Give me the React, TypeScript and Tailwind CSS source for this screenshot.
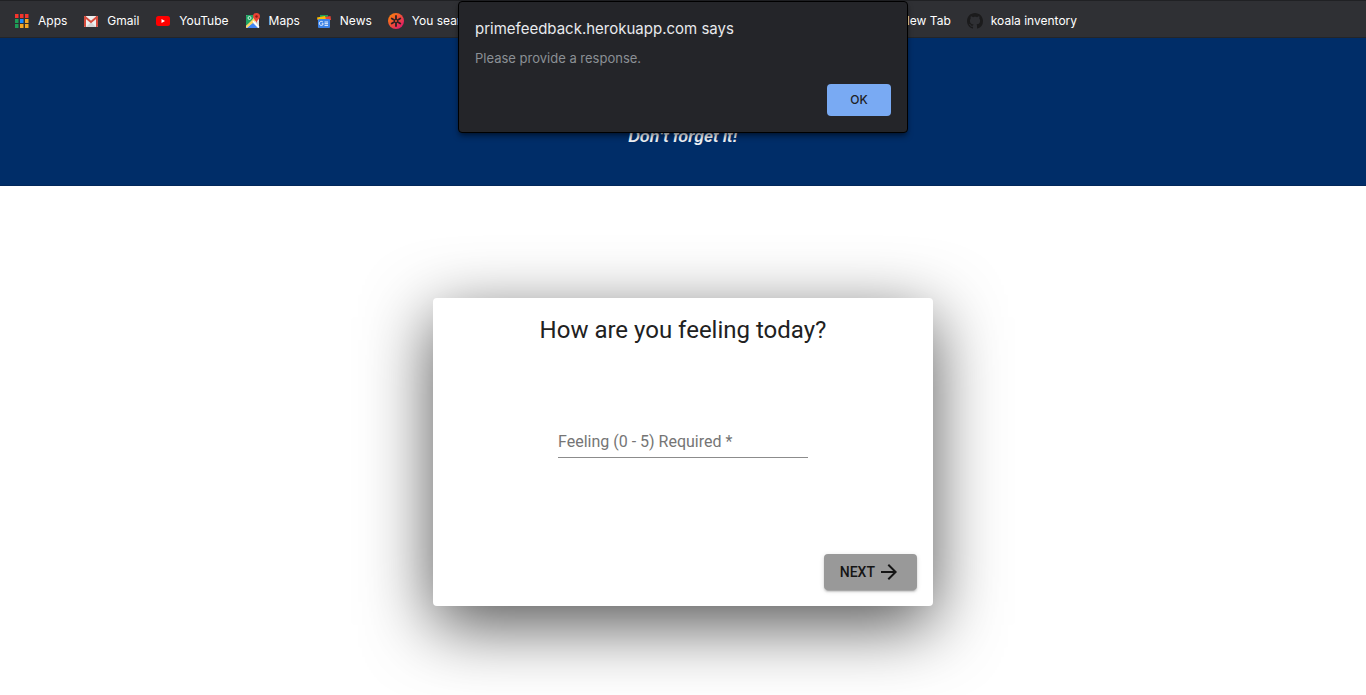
import { useId } from "react";
import type { ReactNode } from "react";

function AppsIcon() {
  const rows = [
    ["#f4352c", "#f4352c", "#f4352c"],
    ["#1e9e57", "#1a8cff", "#f5a623"],
    ["#1e9e57", "#f5a623", "#f5a623"],
  ];
  return (
    <svg viewBox="0 0 16 16" className="size-4" aria-hidden="true">
      {rows.map((row, y) =>
        row.map((c, x) => (
          <rect key={`${x}-${y}`} x={1 + x * 5} y={1 + y * 5} width="3.500" height="4" fill={c} />
        ))
      )}
    </svg>
  );
}

function GmailIcon() {
  return (
    <svg viewBox="0 0 16 16" className="size-4" aria-hidden="true">
      <rect x="1" y="3" width="14" height="11" rx="1" fill="#eeeeee" />
      <path d="M3 14 8 9l5 5z" fill="#d5d5d5" />
      <path d="M1 4a1 1 0 0 1 1-1h1v11H2a1 1 0 0 1-1-1zM13 3h1a1 1 0 0 1 1 1v9a1 1 0 0 1-1 1h-1z" fill="#d54b3d" />
      <path d="M1.500 3.500 8 9l6.500-5.500" fill="none" stroke="#d54b3d" strokeWidth="2" />
    </svg>
  );
}

function YouTubeIcon() {
  return (
    <svg viewBox="0 0 16 16" className="size-4" aria-hidden="true">
      <rect x="1" y="3" width="14" height="10" rx="2.500" fill="#ff0000" />
      <path d="M6.500 6v4L10 8z" fill="#fff" />
    </svg>
  );
}

function MapsIcon() {
  return (
    <svg viewBox="0 0 16 16" className="size-4" aria-hidden="true">
      <rect x="1" y="2" width="13" height="13" rx="1" fill="#e8eaed" />
      <path d="M2 2h8L7 8 1 13V3a1 1 0 0 1 1-1z" fill="#1fa463" />
      <path d="M2 15 7.500 9.500 13 15z" fill="#4285f4" />
      <path d="M1 13 10 4l2 3-10.500 8z" fill="#fdd663" />
      <path d="M9 9.500 14 14V8z" fill="#dadce0" />
      <path d="m8 8 6 6.500" stroke="#fff" strokeWidth="1.500" />
      <circle cx="4.500" cy="5" r="1.500" fill="none" stroke="#fff" strokeWidth=".8" />
      <path d="M11.500 0a3.500 3.500 0 0 1 3.500 3.500c0 2.500-3 3.500-3.500 6.500-.5-3-3.500-4-3.500-6.500A3.500 3.500 0 0 1 11.500 0z" fill="#ea4335" />
      <circle cx="11.500" cy="3.500" r="1.200" fill="#8c1d14" />
    </svg>
  );
}

function NewsIcon() {
  return (
    <svg viewBox="0 0 16 16" className="size-4" aria-hidden="true">
      <path d="M4 2h8v5H4z" fill="#1e9e57" />
      <path d="m9 4 5.500-1 .5 4H9z" fill="#ea4335" />
      <path d="m1 4.500 8-1.500 1 4H1.500z" fill="#fbbc04" />
      <rect x="2" y="6" width="12" height="9" rx="1" fill="#3b82e8" />
      <path d="M7 9.300a2 2 0 1 0 .3 1.500H5.700M8.500 9H12M8.500 10.700H12M8.500 12.400H12" fill="none" stroke="#fff" strokeWidth=".9" />
    </svg>
  );
}

function AsteriskIcon() {
  const gradient = useId();
  return (
    <svg viewBox="0 0 16 16" className="size-4" aria-hidden="true">
      <defs>
        <linearGradient id={gradient} x1="0" y1="0" x2="1" y2="1">
          <stop offset="0.100" stopColor="#fd7f0c" />
          <stop offset="0.900" stopColor="#e0186c" />
        </linearGradient>
      </defs>
      <circle cx="8" cy="8" r="8" fill={`url(#${gradient})`} />
      <path d="M8 3v10M3.700 5.500l8.600 5M12.300 5.500l-8.600 5" stroke="#2b2023" strokeWidth="1.800" strokeLinecap="round" />
      <circle cx="8" cy="8" r="1" fill="#f0552e" />
    </svg>
  );
}

function GithubIcon() {
  return (
    <svg viewBox="0 0 16 16" className="size-4" aria-hidden="true">
      <path
        fill="#1b1b1c"
        d="M8 0C3.580 0 0 3.580 0 8c0 3.540 2.290 6.530 5.470 7.590.4.070.55-.17.55-.38 0-.19-.01-.82-.01-1.490-2.010.37-2.530-.49-2.690-.94-.09-.23-.48-.94-.82-1.130-.28-.15-.68-.52-.01-.53.63-.01 1.080.58 1.230.82.72 1.210 1.870.87 2.330.66.07-.52.28-.87.51-1.070-1.780-.2-3.640-.89-3.640-3.950 0-.87.31-1.590.82-2.150-.08-.2-.36-1.020.08-2.120 0 0 .67-.21 2.200.82.64-.18 1.320-.27 2-.27s1.360.09 2 .27c1.530-1.040 2.200-.82 2.200-.82.44 1.100.16 1.920.08 2.120.51.56.82 1.270.82 2.150 0 3.070-1.870 3.750-3.650 3.950.29.25.54.73.54 1.480 0 1.070-.01 1.930-.01 2.200 0 .21.15.46.55.38A8.010 8.010 0 0 0 16 8c0-4.420-3.580-8-8-8z"
      />
    </svg>
  );
}

function Bookmark({ icon, label, className = "" }: { icon?: ReactNode; label: string; className?: string }) {
  return (
    <a href="#" className={`flex shrink-0 items-center gap-2 whitespace-nowrap ${className}`}>
      {icon}
      <span>{label}</span>
    </a>
  );
}

function BookmarksBar() {
  return (
    <nav
      aria-label="Bookmarks"
      className="flex h-[38px] items-center gap-4 overflow-hidden border-y border-t-[#202124] border-b-[#232529] bg-[#2f3034] px-3.5 pt-1 font-['Inter','Liberation_Sans',sans-serif] text-xs text-white"
    >
      <Bookmark icon={<AppsIcon />} label="Apps" />
      <Bookmark icon={<GmailIcon />} label="Gmail" />
      <Bookmark icon={<YouTubeIcon />} label="YouTube" />
      <Bookmark icon={<MapsIcon />} label="Maps" />
      <Bookmark icon={<NewsIcon />} label="News" />
      <Bookmark icon={<AsteriskIcon />} label="You sear" className="w-[497px]" />
      <Bookmark label="New Tab" />
      <Bookmark icon={<GithubIcon />} label="koala inventory" />
    </nav>
  );
}

function AlertDialog() {
  return (
    <div
      role="alertdialog"
      aria-labelledby="alert-title"
      aria-describedby="alert-text"
      className="absolute top-px left-1/2 flex w-[450px] -translate-x-1/2 flex-col rounded border border-black bg-[#242529] p-4 font-['Inter','Liberation_Sans',sans-serif] shadow-md shadow-black/40"
    >
      <h2 id="alert-title" className="text-[15px] leading-[22px] text-[#e8eaed]">
        primefeedback.herokuapp.com says
      </h2>
      <p id="alert-text" className="mt-2 text-[13px] leading-5 text-[#8b9095]">
        Please provide a response.
      </p>
      <button type="button" className="mt-4 h-8 w-16 self-end rounded bg-[#79aaf3] text-xs font-medium text-[#202124]">
        OK
      </button>
    </div>
  );
}

function FeelingCard() {
  return (
    <form className="flex w-[500px] flex-col rounded bg-white p-4 shadow-[0_19px_68px_rgba(0,0,0,0.68)]">
      <h1 className="text-center text-2xl text-[#212121]">How are you feeling today?</h1>
      <div className="relative mx-auto mt-20 w-[250px]">
        <label htmlFor="feeling" className="pointer-events-none absolute inset-x-0 top-1 text-base text-[#757575]">
          Feeling (0 - 5) Required *
        </label>
        <input
          id="feeling"
          type="text"
          inputMode="numeric"
          required
          className="block h-8 w-full border-b border-[#8c8c8c] bg-transparent text-base text-[#212121] outline-none"
        />
      </div>
      <button
        type="button"
        className="mt-24 flex h-9 items-center gap-0.5 self-end rounded bg-[#999999] px-4 text-sm font-medium text-[#151515] shadow-[0_3px_1px_-2px_rgba(0,0,0,0.2),0_2px_2px_0_rgba(0,0,0,0.14),0_1px_5px_0_rgba(0,0,0,0.12)]"
      >
        NEXT
        <svg viewBox="0 0 24 24" className="size-6" fill="currentColor" aria-hidden="true">
          <path d="M12 4l-1.410 1.410L16.170 11H4v2h12.170l-5.580 5.590L12 20l8-8z" />
        </svg>
      </button>
    </form>
  );
}

export default function App() {
  return (
    <div className="relative flex min-h-screen flex-col overflow-hidden bg-white font-['Roboto','Liberation_Sans',sans-serif]">
      <BookmarksBar />
      <header className="flex h-[148px] items-end justify-center border-b border-[#02275a] bg-[#002d68] pb-9">
        <p className="font-['Liberation_Sans',Arial,sans-serif] text-base font-bold text-[#f1f3f6] italic">
          Don't forget it!
        </p>
      </header>
      <main className="flex justify-center pt-28 pb-[89px]">
        <FeelingCard />
      </main>
      <AlertDialog />
    </div>
  );
}
